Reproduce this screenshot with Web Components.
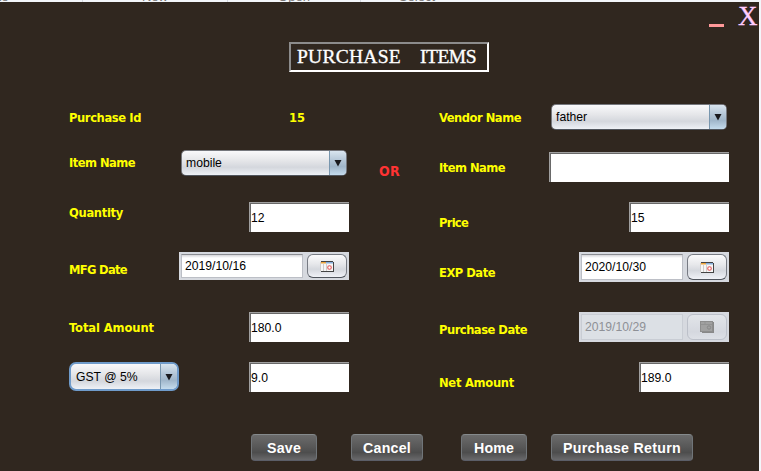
<!DOCTYPE html>
<html lang="en"><head><meta charset="utf-8"><title>Purchase Items</title>
<style>html,body{margin:0;height:100%;overflow:hidden;background:#f3f6fa}</style></head>
<body><purchase-window></purchase-window>
<script>
const define=(name,css,html,after)=>customElements.define(name,class extends HTMLElement{
  constructor(){super();this.attachShadow({mode:'open'});}
  connectedCallback(){
    this.shadowRoot.innerHTML=`<style>*{box-sizing:border-box}:host{box-sizing:border-box}${css}</style>${typeof html==='function'?html(this):html}`;
    if(after)after(this);
  }
});
const attr=(e,n,d='')=>e.getAttribute(n)??d;

/* Text whose tracking is adjusted to fill a given width */
define('fit-text',':host{display:inline-block;white-space:pre}span{display:inline-block}',
 e=>`<span>${attr(e,'text')}</span>`,
 e=>{const s=e.shadowRoot.querySelector('span'),w=+attr(e,'w');
   if(w){const n=attr(e,'text').length;s.style.letterSpacing=(w-s.getBoundingClientRect().width)/n+'px';}});

define('form-label',`:host{display:block;height:30px;line-height:30px;color:#ff0;flex:none;
  font:bold 12.8px/30px "DejaVu Sans Condensed","DejaVu Sans",sans-serif;font-stretch:condensed}`,
 e=>`<fit-text text="${attr(e,'text')}" w="${attr(e,'w')-1}"></fit-text>`,
 e=>{e.style.marginTop=attr(e,'dy','0')+'px';});

define('text-field',`:host{display:block;height:30px;background:#fff;color:#000;flex:none;margin-left:auto;
  border-top:1px solid #a0a0a0;border-left:1px solid #a0a0a0;font:12.2px/27px "Liberation Sans",Arial,sans-serif}
  div{height:29px;border-top:1px solid #696969;border-left:1px solid #696969;padding-top:1px}`,
 e=>`<div>${attr(e,'value')}</div>`,e=>{e.style.width=attr(e,'w')+'px';});

define('combo-box',`:host{display:flex;height:26px;flex:none;border-radius:5px;overflow:hidden;color:#000;
  border:1px solid #75777d;border-bottom-color:#50555d;background:linear-gradient(#f9f9fb,#e5e6e9 40%,#d4d7dd 68%,#eef1f6);
  font:12.2px/25px "Liberation Sans",Arial,sans-serif;padding-left:4px}
  :host([focused]){height:29px;border:2px solid #6f9bca;border-radius:7px;padding-left:5px;line-height:27px}
  span{flex:1}
  i{width:17px;display:flex;align-items:center;justify-content:center;border-left:1px solid #7896ae;
   background:linear-gradient(#d9e5ef,#b3c5d6 40%,#a0b6ca 65%,#c5dced)}
  svg{display:block}`,
 e=>`<span>${attr(e,'value')}</span><i><svg width="8" height="8"><path d="M.5 1H7.5L4 7.5Z" fill="#1a1a1e"/></svg></i>`,
 e=>{e.style.width=attr(e,'w')+'px';});

define('date-field',`:host{display:flex;height:30px;flex:none;margin-left:auto;background:#d6d9df;padding:2px 2px;gap:4px;
  color:#000;font:12.2px/25px "Liberation Sans",Arial,sans-serif}
  :host([short]){height:28px}
  .in{flex:1;background:linear-gradient(#d5d5d9,#fff 3px);border:1px solid #bcbfc6;border-top-color:#8b8d92;padding-left:3px}
  .btn{width:40px;border:1px solid #777b83;border-bottom-color:#50555d;border-radius:6px;
   background:linear-gradient(#fbfbfc,#e7e8eb 40%,#d5d8de 65%,#f0f2f7);display:flex;align-items:center;justify-content:center}
  :host([short]) .in{line-height:23px}
  :host([disabled]){color:#8e9096}
  :host([disabled]) .in{background:#dce0e5;border-color:#c9cdd4}
  :host([disabled]) .btn{background:linear-gradient(#e2e5e9,#d5d8df 70%,#dde0e6);border-color:#bcc0c9}`,
 e=>`<div class="in">${attr(e,'value')}</div><div class="btn">${e.hasAttribute('disabled')
 ?'<svg width="14" height="12"><path d="M2 1H14V12H2Z" fill="#888"/><rect x=".5" y=".5" width="12" height="10" fill="#a0a0a0" stroke="#8d8d8d"/><path d="M1 3.5H12M5 1V3" stroke="#929292"/><circle cx="9" cy="6.5" r="1.7" fill="none" stroke="#888"/></svg>'
 :'<svg width="14" height="11"><rect x="1" y="1" width="12" height="9.5" fill="#f6f6f6"/><path d="M1 1.5H6" stroke="#eda63d" stroke-width="2"/><path d="M6 1.5H13" stroke="#86aedb" stroke-width="2"/><path d="M1 .5H13M1 10.5H13.5M13.5 1V11" stroke="#444" fill="none"/><path d="M.5 1V10M3.5 3V10M6.5 3V10" stroke="#d0ccc9"/><circle cx="9.5" cy="6.5" r="1.8" fill="#fff" stroke="#e45656" stroke-width="1.1"/></svg>'}</div>`,
 e=>{e.style.width=attr(e,'w')+'px';});

define('action-button',`:host{display:flex;height:27px;flex:none;align-items:center;justify-content:center;border-radius:4px;
  border:1px solid #707579;border-top-color:#858a8c;border-bottom-color:#5b5e68;background:linear-gradient(#6b6b6b,#595959 45%,#4d4d4d 70%,#69696b);
  color:#fff;font:bold 14.2px/25px "Liberation Sans",Arial,sans-serif;padding-top:1px}`,
 e=>`<fit-text text="${attr(e,'text')}" w="${attr(e,'tw')}"></fit-text>`,
 e=>{e.style.width=attr(e,'w')+'px';});

define('form-row',`:host{display:flex;height:30px;align-items:flex-start}`,'<slot></slot>');
define('form-column',`:host{display:flex;flex-direction:column;gap:20px}::slotted(.group){margin-top:10px}`,'<slot></slot>');

define('title-box',`:host{display:flex;width:200px;height:30px;border:2px solid #fff;border-top-color:#8c8c8c;border-left-color:#8c8c8c;
  color:#fff;font:19.5px/26px "Liberation Serif",serif;-webkit-text-stroke:.35px #fff;padding:0 0 0 6px;gap:19px}`,
 '<fit-text text="PURCHASE" w="104"></fit-text><fit-text text="ITEMS" w="56"></fit-text>');

define('table-strip',`:host{display:grid;grid-template-columns:83px 145px 133px 112px 1fr;height:2px;overflow:hidden;background:#f3f6fa;
  color:#777;font:13px/14px "Liberation Sans",Arial,sans-serif}
  span{height:14px;margin-top:-10px;border-right:1px solid #d5d9df;text-align:center}
  span:first-of-type{text-align:left;text-indent:-19px}span:last-of-type{border:0}`,
 '<span>Date</span><span>New</span><span>Open</span><span>Select</span>');

define('window-controls',`:host{display:flex;justify-content:flex-end;height:40px;padding:0 3px 0 0;gap:14px;color:#fcf}
  b{width:15px;height:3px;margin-top:22px;background:#f99}
  span{font:27px/29px "Liberation Serif",serif;width:18px;text-align:center;-webkit-text-stroke:.3px #fcf}`,'<b></b><span>X</span>');

define('purchase-window',`:host{display:block;width:761px;height:471px}
  main{width:759px;height:469px;background:#30271f}
  title-box{margin-left:289px}
  .form{display:grid;grid-template-columns:280px 90px 290px;padding:30px 0 0 69px}
  .or{color:#f33;font:bold 14px/30px "DejaVu Sans Condensed","DejaVu Sans",sans-serif;font-stretch:condensed;padding:54px 0 0 30px}
  .push{margin-left:auto}
  .actions{display:flex;padding:42px 0 0 251px}`,
`<table-strip></table-strip><main><window-controls></window-controls><title-box></title-box>
<div class="form">
<form-column>
 <form-row><form-label text="Purchase Id" w="73" dy="1"></form-label><form-label text="15" w="17" dy="1" style="margin-left:148px"></form-label></form-row>
 <form-row><form-label text="Item Name" w="67" dy="-4"></form-label><combo-box value="mobile" w="166" class="push" style="margin-right:2px;margin-top:-2px"></combo-box></form-row>
 <form-row><form-label text="Quantity" w="55" dy="-4"></form-label><text-field value="12" w="100"></text-field></form-row>
 <form-row><form-label text="MFG Date" w="59" dy="3"></form-label><date-field short value="2019/10/16" w="170"></date-field></form-row>
 <form-row class="group"><form-label text="Total Amount" w="86" dy="1"></form-label><text-field value="180.0" w="100"></text-field></form-row>
 <form-row><combo-box focused value="GST @ 5%" w="110"></combo-box><text-field value="9.0" w="100"></text-field></form-row>
</form-column>
<div class="or"><fit-text text="OR" w="21"></fit-text></div>
<form-column>
 <form-row><form-label text="Vendor Name" w="83" dy="1"></form-label><combo-box value="father" w="176" class="push" style="margin-right:2px;margin-top:2px"></combo-box></form-row>
 <form-row><form-label text="Item Name" w="67" dy="1"></form-label><text-field w="180"></text-field></form-row>
 <form-row><form-label text="Price" w="30" dy="6"></form-label><text-field value="15" w="100"></text-field></form-row>
 <form-row><form-label text="EXP Date" w="57" dy="6"></form-label><date-field value="2020/10/30" w="150"></date-field></form-row>
 <form-row class="group"><form-label text="Purchase Date" w="89" dy="3"></form-label><date-field disabled value="2019/10/29" w="150"></date-field></form-row>
 <form-row><form-label text="Net Amount" w="76" dy="6"></form-label><text-field value="189.0" w="90"></text-field></form-row>
</form-column>
</div>
<div class="actions">
 <action-button text="Save" w="66" tw="34"></action-button>
 <action-button text="Cancel" w="72" tw="48" style="margin-left:34px"></action-button>
 <action-button text="Home" w="66" tw="40" style="margin-left:38px"></action-button>
 <action-button text="Purchase Return" w="142" tw="118" style="margin-left:24px"></action-button>
</div></main>`);
</script></body></html>
